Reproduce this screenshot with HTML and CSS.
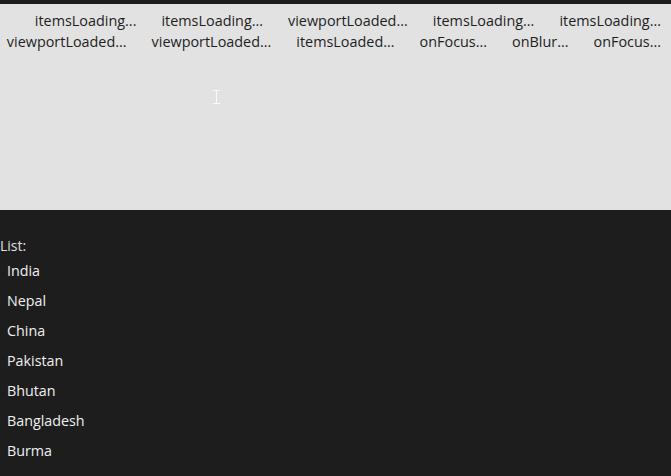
FILE: index.html
```html
<!DOCTYPE html>
<html lang="en">
<head>
  <meta charset="UTF-8" />
  <title>ListView events</title>
  <link rel="stylesheet" href="styles.css">
</head>
<body>
  <div class="output">
    <div class="events">
      <span class="event">itemsLoading...</span>
      <span class="event">itemsLoading...</span>
      <span class="event">viewportLoaded...</span>
      <span class="event">itemsLoading...</span>
      <span class="event">itemsLoading...</span>
      <span class="event">viewportLoaded...</span>
      <span class="event">viewportLoaded...</span>
      <span class="event">itemsLoaded...</span>
      <span class="event">onFocus...</span>
      <span class="event">onBlur...</span>
      <span class="event">onFocus...</span>
    </div>
    <svg class="cursor" width="9" height="16" viewBox="0 0 9 16">
      <path d="M1 1.5h7M4.5 1.5v13M1 14.5h7" stroke="#fafafa" stroke-width="1" fill="none"/>
    </svg>
  </div>

  <div class="list-section">
    <div class="list-label">List:</div>
    <ul class="country-list">
      <li>India</li>
      <li>Nepal</li>
      <li>China</li>
      <li>Pakistan</li>
      <li>Bhutan</li>
      <li>Bangladesh</li>
      <li>Burma</li>
    </ul>
  </div>
</body>
</html>
```

FILE: styles.css
```css
body {
  margin: 0;
  background-color: #1d1d1d;
  font-family: "Open Sans", "Noto Sans", sans-serif;
  color: #f0f0f0;
}

.output {
  position: relative;
  margin-top: 4px;
  height: 206px;
  background-color: #e2e2e2;
  color: #1e1e1e;
}

.events {
  display: flex;
  flex-wrap: wrap;
  justify-content: flex-end;
  column-gap: 25px;
  padding: 6px 10px 0 4px;
  font-size: 14.4px;
  line-height: 21px;
}

.cursor {
  position: absolute;
  left: 212px;
  top: 85px;
}

.list-section {
  padding-top: 26px;
}

.list-label {
  font-size: 14px;
  line-height: 20px;
  color: #e0e0e0;
}

.country-list {
  list-style: none;
  margin: 0;
  padding: 0 0 0 7px;
}

.country-list li {
  font-size: 14.3px;
  line-height: 30px;
}
```
